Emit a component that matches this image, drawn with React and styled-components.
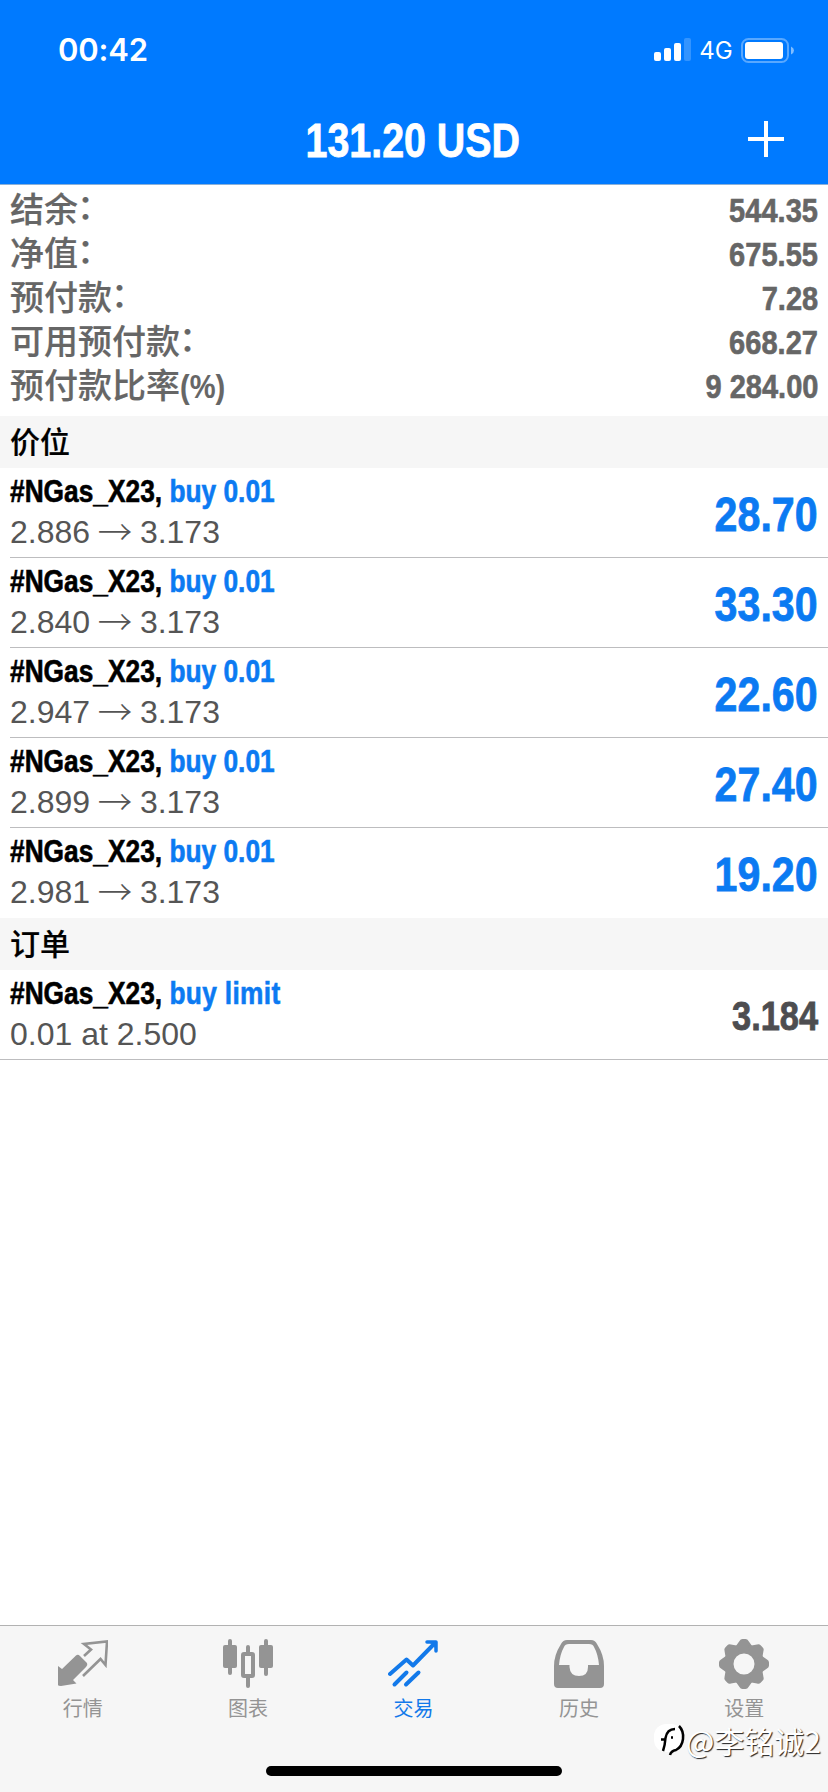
import React from 'react';
import styled, { createGlobalStyle } from 'styled-components';

const GlobalStyle = createGlobalStyle`
    * {
        box-sizing: border-box;
    }
    body {
        margin: 0;
        background: #fff;
        font-family: "Liberation Sans", "Noto Sans CJK SC", sans-serif;
    }
`

const Screen = styled.div`
    width: 828px;
    height: 1792px;
    display: flex;
    flex-direction: column;
    overflow: hidden;
    background: #fff;
`

// condensed face: bold text squeezed towards the edge it is aligned to
const Condensed = styled.span`
    display: inline-block;
    font-weight: 700;
    white-space: pre;
    font-size: ${p => p.$size}px;
    color: ${p => p.$color};
    -webkit-text-stroke: ${p => p.$stroke || 0.6}px;
    transform: scaleX(${p => p.$squeeze || 0.835});
    transform-origin: ${p => p.$from || 'right'} center;
`

const Header = styled.header`
    height: 185px;
    flex: none;
    background: #007aff;
    border-bottom: 1px solid #8ab0d8;
    color: #fff;
`

const StatusBar = styled.div`
    height: 99px;
    display: flex;
    justify-content: space-between;
    align-items: center;
    padding: 1px 34px 0 58px;
`

const Clock = styled.div`
    font: 600 31px/40px Inter, sans-serif;
    letter-spacing: -0.2px;
`

const StatusIcons = styled.div`
    display: flex;
    align-items: center;
    svg {
        display: block;
    }
`

const Network = styled.span`
    width: 50px;
    text-align: center;
    font: 400 24px/28px Inter, sans-serif;
    padding-top: 2px;
`

const NavBar = styled.div`
    height: 85px;
    display: grid;
    grid-template-columns: 80px 1fr 80px;
    align-items: center;
    padding-right: 2px;
`

const Title = styled.h1`
    grid-column: 2;
    margin: 0;
    padding-top: 4px;
    text-align: center;
    line-height: 56px;
`

const AddButton = styled.button`
    border: 0;
    padding: 0 0 5px 2px;
    background: none;
    justify-self: start;
    svg {
        display: block;
    }
`

const Summary = styled.dl`
    margin: 0;
    padding: 3px 10px 8px 10px;
    height: 231px;
    flex: none;
`

const SummaryRow = styled.div`
    display: flex;
    justify-content: space-between;
    height: 44px;
    line-height: 45px;
    color: #666;
    dt {
        font-size: 34px;
        font-weight: 500;
        line-height: 45px;
        -webkit-text-stroke: 0.2px;
    }
    dd {
        margin: 0;
    }
`

const Colon = styled.span`
    display: inline-block;
    transform: translate(-1px, -3px);
`

const SectionTitle = styled.h2`
    margin: 0;
    height: 52px;
    flex: none;
    padding-left: 10px;
    background: #f6f6f6;
    font-size: 30px;
    font-weight: 500;
    line-height: 53px;
    color: #000;
    -webkit-text-stroke: 0.2px;
`

const Item = styled.div`
    height: 90px;
    flex: none;
    display: flex;
    justify-content: space-between;
    margin-left: ${p => (p.$full ? 0 : 10)}px;
    padding: 3px 10px 0 ${p => (p.$full ? 10 : 0)}px;
    border-bottom: 1px solid ${p => (p.$last ? 'transparent' : '#bdbdbf')};
`

const Symbol = styled.div`
    height: 41px;
    line-height: 41px;
    em {
        font-style: normal;
        letter-spacing: ${p => (p.$wide ? 0.4 : 0)}px;
        color: #0b7af2;
    }
`

const Price = styled.div`
    font-size: 32px;
    line-height: 40px;
    color: #555;
    white-space: pre;
`

const Arrow = styled.span`
    display: inline-block;
    font-family: "Noto Sans CJK SC", sans-serif;
    font-weight: 300;
    line-height: 1;
    transform: translateY(1px) scale(1.08);
`

const Profit = styled.div`
    line-height: 86px;
    height: 86px;
`

const Spacer = styled.div`
    flex: 1;
`

const Footer = styled.footer`
    height: 167px;
    flex: none;
    background: #f6f6f6;
    border-top: 1px solid #b2b2b2;
    position: relative;
`

const Tabs = styled.nav`
    display: grid;
    grid-template-columns: repeat(5, 1fr);
    height: 140px;
    padding-right: 1px;
`

const Tab = styled.a`
    display: flex;
    flex-direction: column;
    align-items: center;
    padding-top: 13px;
    color: ${p => (p.$active ? '#1279ea' : '#949494')};
    font-size: 20px;
    line-height: 28px;
    svg {
        display: block;
        margin-bottom: 6px;
    }
`

const HomeIndicator = styled.div`
    width: 296px;
    height: 10px;
    margin: 0 auto;
    border-radius: 5px;
    background: #000;
`

const Watermark = styled.div`
    position: absolute;
    right: 7px;
    top: 97px;
    display: flex;
    align-items: center;
    gap: 0;
    color: #fff;
    font-family: "Noto Sans CJK SC", sans-serif;
    font-weight: 400;
    font-size: 30px;
    line-height: 34px;
    text-shadow: 1px 1px 1px #222;
`

const account = [
    { label: '结余', value: '544.35' },
    { label: '净值', value: '675.55' },
    { label: '预付款', value: '7.28' },
    { label: '可用预付款', value: '668.27' },
    { label: '预付款比率', unit: '(%)', value: '9 284.00' },
]

const positions = [
    { open: '2.886', now: '3.173', profit: '28.70' },
    { open: '2.840', now: '3.173', profit: '33.30' },
    { open: '2.947', now: '3.173', profit: '22.60' },
    { open: '2.899', now: '3.173', profit: '27.40' },
    { open: '2.981', now: '3.173', profit: '19.20' },
]

const QuotesIcon = () => (
    <svg width="50" height="50" viewBox="0 0 50 50">
        <path d="M0 27L4 30L18 16.500Q20 15 22 17L29 24Q30 26 28 28L15 41L18.500 44.500L3 47Q0 47 0 46Z" fill="currentColor" />
        <path d="M26 17L33 10.500L26 5L49 2.500L47.500 26L42.500 20L25 37" fill="none" stroke="currentColor" strokeWidth="2.6" />
    </svg>
)

const ChartIcon = () => (
    <svg width="50" height="50" viewBox="0 0 50 50" fill="currentColor">
        <rect x="5" y="0" width="4" height="36" rx="2" />
        <rect x="0" y="6" width="14" height="23" rx="2" />
        <rect x="41" y="0" width="4" height="37" rx="2" />
        <rect x="36" y="6" width="14" height="23" rx="2" />
        <rect x="23" y="6" width="4" height="10" rx="2" />
        <rect x="23" y="36" width="4" height="13" rx="2" />
        <rect x="20" y="15" width="10" height="22" rx="1" fill="none" stroke="currentColor" strokeWidth="4" />
    </svg>
)

const TradeIcon = () => (
    <svg width="50" height="50" viewBox="0 0 50 50" fill="none" stroke="currentColor" strokeWidth="4" strokeLinecap="round" strokeLinejoin="round">
        <path d="M2 35L18.500 20.500L25 26.500L46 5" />
        <path d="M39 3H48V12" strokeWidth="3.500" />
        <path d="M42 3H48V9Z" fill="currentColor" strokeWidth="1" />
        <path d="M6.500 45.500L18.500 33.500M18 45.500L30.500 33.500" />
    </svg>
)

const HistoryIcon = () => (
    <svg width="50" height="50" viewBox="0 0 50 50" fill="currentColor">
        <path fillRule="evenodd" d="M13 1H37Q41 1 43 5Q50 16 50 27V45Q50 49 46 49H4Q0 49 0 45V27Q0 16 7 5Q9 1 13 1ZM15 5Q11 5 10 8Q6 15 5 26H15.500V28Q16 37 25 37Q34 37 34 28V26H45Q44 15 40 8Q39 5 35 5Z" />
    </svg>
)

const teeth = [0, 45, 90, 135, 180, 225, 270, 315]

const SettingsIcon = () => (
    <svg width="50" height="50" viewBox="0 0 50 50">
        <circle cx="25" cy="25" r="15" fill="none" stroke="currentColor" strokeWidth="9" />
        {teeth.map(a => (
            <path key={a} d="M15.500 9L20.500 2Q21.500 0 23.500 0H26.500Q28.500 0 29.500 2L34.500 9L28 13H22Z" fill="currentColor" transform={`rotate(${a} 25 25)`} />
        ))}
    </svg>
)

const tabs = [
    { label: '行情', icon: QuotesIcon },
    { label: '图表', icon: ChartIcon },
    { label: '交易', icon: TradeIcon, active: true },
    { label: '历史', icon: HistoryIcon },
    { label: '设置', icon: SettingsIcon },
]

const SignalIcon = () => (
    <svg width="37" height="24" viewBox="0 0 37 24" fill="#fff">
        <rect x="0" y="14" width="7" height="9" rx="2" />
        <rect x="10" y="10" width="7" height="13" rx="2" />
        <rect x="20" y="5" width="7" height="18" rx="2" />
        <rect x="30" y="0" width="7" height="23" rx="2" opacity="0.2" />
    </svg>
)

const BatteryIcon = () => (
    <svg width="53" height="25" viewBox="0 0 53 25" fill="#fff">
        <rect x="1" y="1" width="46" height="23" rx="6.500" fill="none" stroke="#fff" strokeWidth="2" opacity="0.35" />
        <rect x="4" y="4" width="38" height="17" rx="3" />
        <path d="M50 8.500Q53 10 53 12.500T50 16.500Z" opacity="0.5" />
    </svg>
)

const App = () => {
    return (
        <Screen>
            <GlobalStyle />
            <Header>
                <StatusBar>
                    <Clock>00:42</Clock>
                    <StatusIcons>
                        <SignalIcon />
                        <Network>4G</Network>
                        <BatteryIcon />
                    </StatusIcons>
                </StatusBar>
                <NavBar>
                    <Title>
                        <Condensed $size={48} $from="center" $squeeze={0.82} $stroke={0.8}>131.20 USD</Condensed>
                    </Title>
                    <AddButton>
                        <svg width="36" height="36" viewBox="0 0 36 36">
                            <path d="M18 0V36M0 18H36" stroke="#fff" strokeWidth="4" />
                        </svg>
                    </AddButton>
                </NavBar>
            </Header>
            <Summary>
                {account.map(({ label, unit, value }) => (
                    <SummaryRow key={label}>
                        <dt>
                            {label}
                            {unit
                                ? <Condensed $size={33} $from="left" $squeeze={0.88} $stroke={0.1}>{unit}</Condensed>
                                : <Colon>：</Colon>}
                        </dt>
                        <dd><Condensed $size={33} $squeeze={0.88}>{value}</Condensed></dd>
                    </SummaryRow>
                ))}
            </Summary>
            <SectionTitle>价位</SectionTitle>
            {positions.map((p, i) => (
                <Item key={p.open} $last={i === positions.length - 1}>
                    <div>
                        <Symbol>
                            <Condensed $size={31.500} $from="left" $color="#000">#NGas_X23, <em>buy 0.01</em></Condensed>
                        </Symbol>
                        <Price>{p.open} <Arrow>→</Arrow> {p.now}</Price>
                    </div>
                    <Profit>
                        <Condensed $size={49} $color="#0b7af2" $squeeze={0.84} $stroke={0.8}>{p.profit}</Condensed>
                    </Profit>
                </Item>
            ))}
            <SectionTitle>订单</SectionTitle>
            <Item $full>
                <div>
                    <Symbol $wide>
                        <Condensed $size={31.500} $from="left" $color="#000">#NGas_X23, <em>buy limit</em></Condensed>
                    </Symbol>
                    <Price>0.01 at 2.500</Price>
                </div>
                <Profit>
                    <Condensed $size={40} $color="#4d4d50" $squeeze={0.86} $stroke={0.8}>3.184</Condensed>
                </Profit>
            </Item>
            <Spacer />
            <Footer>
                <Tabs>
                    {tabs.map(({ label, icon: Icon, active }) => (
                        <Tab key={label} $active={active}>
                            <Icon />
                            {label}
                        </Tab>
                    ))}
                </Tabs>
                <HomeIndicator />
                <Watermark>
                    <svg width="32" height="34" viewBox="0 0 32 34" fill="none">
                        <rect x="0" y="1" width="29" height="28" rx="12" fill="#fff" />
                        <path d="M7 16.500H12M17 14.500H19M9 28Q11 22 11.500 15Q13 6 21 6" stroke="#000" strokeWidth="2.500" />
                        <path d="M25 3Q30 8 29 16Q28 24 22 27Q17 28 16 32" stroke="#000" strokeWidth="2.500" />
                    </svg>
                    @李铭诚2
                </Watermark>
            </Footer>
        </Screen>
    );
};

export default App;
